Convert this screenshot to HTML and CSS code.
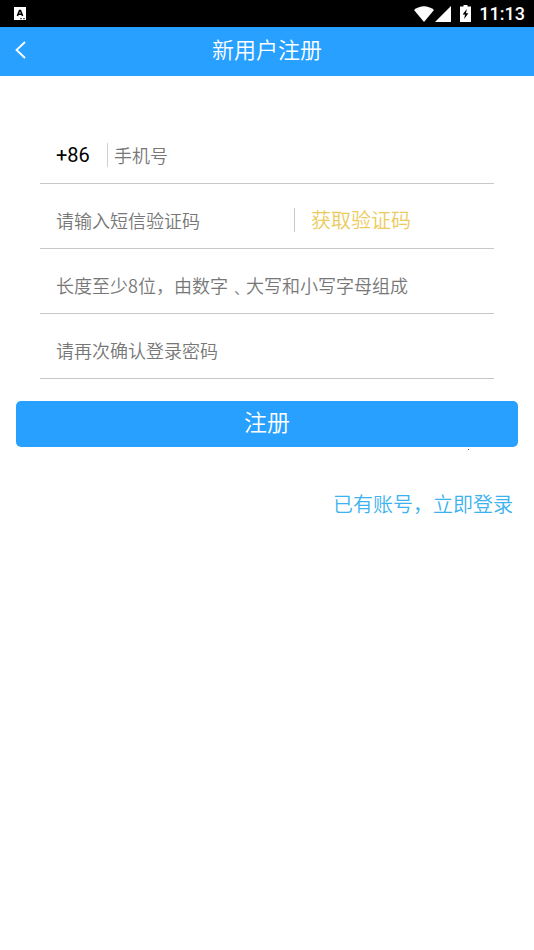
FILE: index.html
```html
<!DOCTYPE html>
<html lang="zh-CN">
<head>
<meta charset="utf-8">
<meta name="viewport" content="width=device-width, initial-scale=1">
<title>新用户注册</title>
<link rel="stylesheet" href="styles.css">
</head>
<body>
<div class="status">
  <svg class="status-app" width="12" height="13" viewBox="0 0 12 13" aria-hidden="true">
    <rect width="12" height="13" fill="#fff"/>
    <path d="M3.4 9 L5.5 3.5 H6.5 L8.6 9 M4.5 7.2 H7.5" fill="none" stroke="#000" stroke-width="1.6"/>
    <path d="M6 11.7 H8 M9 11.7 H11" stroke="#000" stroke-width=".8"/>
  </svg>
  <div class="status-right">
    <svg width="20" height="16" viewBox="0 0 20 16" aria-hidden="true"><path d="M0 4 Q10 -3.5 20 4 L10 16 Z" fill="#fff"/></svg>
    <svg width="16" height="16" viewBox="0 0 16 16" aria-hidden="true"><path d="M16 0 V16 H0 Z" fill="#fff"/></svg>
    <svg class="battery" width="11" height="17" viewBox="0 0 11 17" aria-hidden="true"><path d="M3.5 0 H7.5 V1.5 H11 V17 H0 V1.5 H3.5 Z" fill="#fff"/><path d="M6.8 4 L2.6 9.6 H5 L4.2 14 L8.4 8.2 H6 Z" fill="#000"/></svg>
    <span class="time">11:13</span>
  </div>
</div>
<header class="bar">
  <button class="back" type="button" aria-label="返回">
    <svg width="11" height="18" viewBox="0 0 11 18" aria-hidden="true"><path d="M10 1 L1.5 9 L10 17" fill="none" stroke="#fff" stroke-width="1.8"/></svg>
  </button>
  <h1 class="title">新用户注册</h1>
</header>
<main>
  <form class="form">
    <div class="fields">
      <div class="row">
        <span class="prefix">+86</span>
        <input class="input phone" type="tel" placeholder="手机号" aria-label="手机号">
      </div>
      <div class="row">
        <input class="input" type="text" placeholder="请输入短信验证码" aria-label="短信验证码">
        <button class="code" type="button">获取验证码</button>
      </div>
      <div class="row">
        <input class="input" type="password" placeholder="长度至少8位，由数字﹑大写和小写字母组成" aria-label="密码">
      </div>
      <div class="row">
        <input class="input" type="password" placeholder="请再次确认登录密码" aria-label="确认密码">
      </div>
    </div>
    <button class="submit" type="submit">注册</button>
  </form>
  <a class="login" href="#login">已有账号，立即登录</a>
</main>
</body>
</html>
```
FILE: styles.css
```css
* { box-sizing: border-box; }
body {
  margin: 0;
  background: #fff;
  font-family: "Noto Sans CJK SC", sans-serif;
  font-weight: 350;
}
button, input {
  font: inherit;
  border: 0;
  margin: 0;
  padding: 0;
  background: none;
  border-radius: 0;
}
.status {
  display: flex;
  align-items: center;
  justify-content: space-between;
  height: 27px;
  padding: 0 9px 0 14px;
  background: #000;
  color: #fff;
}
.status-right { display: flex; align-items: center; gap: 1px; }
.battery { margin: 0 7px 0 8px; }
.time { font: 500 18px/27px Roboto, sans-serif; }
.bar {
  display: grid;
  grid-template-columns: 48px 1fr 48px;
  height: 49px;
  padding-bottom: 3px;
  background: #27a0ff;
  color: #fff;
}
.back { display: flex; align-items: center; padding-left: 15px; }
.title { margin: 0; font-size: 22px; font-weight: 350; line-height: 42px; text-align: center; }
.form { padding: 43px 16px 0; }
.fields { padding: 0 24px; }
.row {
  display: flex;
  align-items: center;
  height: 65px;
  padding: 8px 16px 0;
  border-bottom: 1px solid #c8c8c8;
}
.prefix {
  width: 52px;
  border-right: 1px solid #d0d0d0;
  font: 400 20px/24px Roboto, sans-serif;
  color: #000;
}
.input {
  flex: 1;
  min-width: 0;
  height: 32px;
  font-size: 18px;
  color: #333;
  outline: 0;
}
.input::placeholder { color: #777; opacity: 1; }
.phone { padding-left: 6px; }
.code {
  width: 184px;
  padding-left: 16px;
  border-left: 1px solid #c8c8c8;
  font-size: 20px;
  line-height: 24px;
  text-align: left;
  color: #eccb5c;
}
.submit {
  position: relative;
  display: block;
  width: 100%;
  height: 46px;
  margin-top: 22px;
  padding-bottom: 6px;
  border-radius: 5px;
  background: #27a0ff;
  font-size: 23px;
  line-height: 40px;
  color: #fff;
}
.submit::after {
  content: "";
  position: absolute;
  right: 49px;
  bottom: -3px;
  width: 1px;
  height: 1px;
  background: #1c6c9c;
}
.login {
  display: block;
  margin: 41px 21px 0;
  font-size: 20px;
  line-height: 32px;
  text-align: right;
  text-decoration: none;
  color: #3cb2ee;
}
```
